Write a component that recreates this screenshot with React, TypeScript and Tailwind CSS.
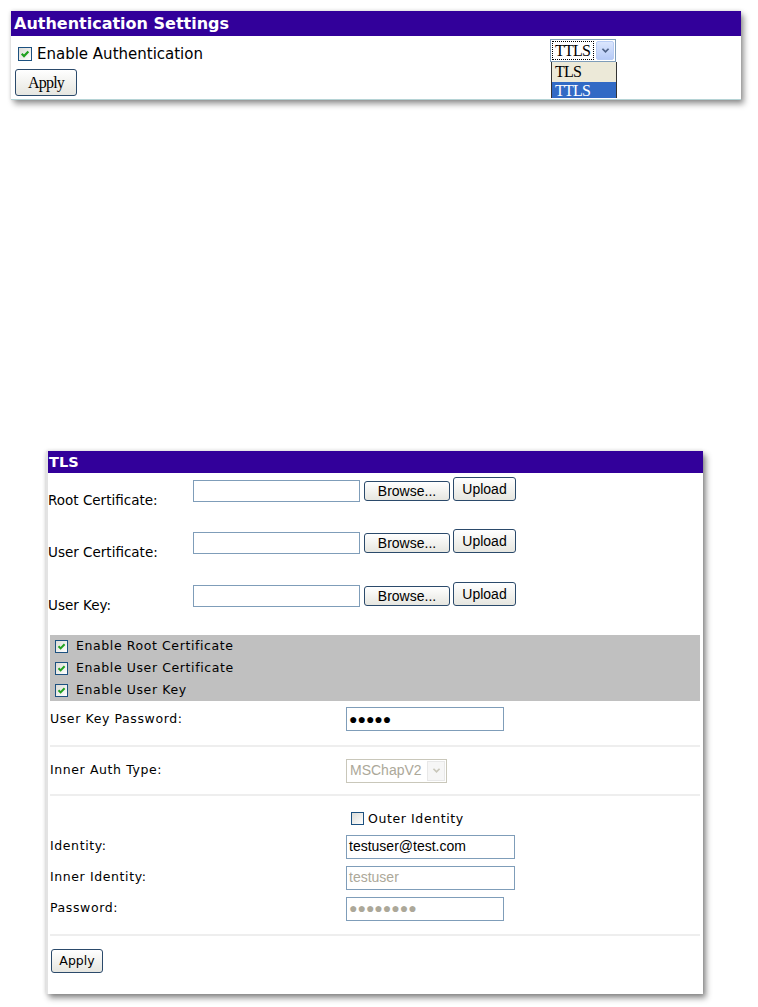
import React from 'react';

const XpCheck = ({ checked, big }: { checked: boolean; big?: boolean }) => (
  <span
    className={`relative inline-block shrink-0 border border-[#1c5180] bg-gradient-to-br from-[#dcdcd7] to-white ${big ? 'h-[14px] w-[14px]' : 'h-[13px] w-[13px]'}`}
  >
    {checked && (
      <svg viewBox="0 0 11 11" className="absolute left-0 top-0 h-full w-full">
        <path d="M2.5 5.2 L4.6 7.4 L8.6 3.2" stroke="#21a121" strokeWidth="2" fill="none" />
      </svg>
    )}
  </span>
);

const Chevron = ({ color }: { color: string }) => (
  <svg viewBox="0 0 10 8" className="h-[7px] w-[9px]">
    <path d="M1.5 2 L5 5.5 L8.5 2" stroke={color} strokeWidth="2" fill="none" />
  </svg>
);

const XpButton = ({ label, className }: { label: string; className: string }) => (
  <button
    className={`flex shrink-0 items-center justify-center rounded-[3px] border border-[#2b4a6b] bg-gradient-to-b from-white to-[#e6e6e0] text-black ${className}`}
  >
    {label}
  </button>
);

const TextBox = ({ className, children }: { className: string; children?: React.ReactNode }) => (
  <div
    className={`flex shrink-0 items-center border border-[#7f9db9] bg-white pl-[2px] font-['Liberation_Sans'] text-[14px] ${className}`}
  >
    {children}
  </div>
);

const Row = ({ label, children, className }: { label: string; children: React.ReactNode; className: string }) => (
  <div className={`flex items-center ${className}`}>
    <div className="w-[296px] shrink-0">{label}</div>
    {children}
  </div>
);

const Separator = () => <div className="h-[2px] bg-[#eeeeee]" />;

const FileRow = ({ label, className }: { label: string; className: string }) => (
  <div className={`flex items-start ${className}`}>
    <div className="w-[145px] shrink-0 pt-[15px] font-['DejaVu_Sans'] text-[13.5px] leading-[16px]">{label}</div>
    <TextBox className="mt-[3px] h-[22px] w-[167px]" />
    <XpButton label="Browse..." className="ml-[4px] mt-[4px] h-[20px] w-[86px] font-['Liberation_Sans'] text-[14px]" />
    <XpButton label="Upload" className="ml-[3px] h-[24px] w-[63px] font-['Liberation_Sans'] text-[14px]" />
  </div>
);

export default function App() {
  return (
    <div className="min-h-screen bg-white pt-[11px] text-black">
      {/* Authentication Settings */}
      <div className="relative ml-[11px] h-[89px] w-[730px] border-b border-[#b5d3d5] bg-white shadow-[3px_4px_6px_rgba(0,0,0,0.4),0_0_4px_rgba(0,0,0,0.15)]">
        <div className="h-[25px] bg-[#32009a] pl-[3px] font-['DejaVu_Sans'] text-[16px] font-bold leading-[25px] text-white">
          Authentication Settings
        </div>
        <div className="flex h-[33px] items-start justify-between">
          <div className="flex items-center gap-[5px] pl-[7px] pt-[10px] font-['DejaVu_Sans'] text-[15px] leading-[16px]">
            <XpCheck checked big />
            <span>Enable Authentication</span>
          </div>
          <div className="relative mr-[125px] mt-[3px] flex h-[23px] w-[66px] items-center border border-[#7f9db9] bg-white pl-[1px]">
            <div className="flex h-[19px] w-[42px] items-center border border-dotted border-black px-[2px] font-['Liberation_Serif'] text-[16px] tracking-[-0.8px]">
              TTLS
            </div>
            <div className="ml-auto mr-[1px] flex h-[19px] w-[18px] items-center justify-center rounded-[2px] border border-[#b9cdf5] bg-gradient-to-b from-[#dbe6fd] to-[#b7cbf7]">
              <Chevron color="#4d6185" />
            </div>
            <div className="absolute left-0 top-[22px] w-[66px] border-x border-[#333] font-['Liberation_Serif'] text-[16px] tracking-[-0.8px]">
              <div className="h-[20px] bg-[#ece9d8] pl-[3px] leading-[20px]">TLS</div>
              <div className="h-[16px] overflow-hidden bg-[#316ac5] pl-[3px] leading-[18px] text-white">TTLS</div>
            </div>
          </div>
        </div>
        <button className="ml-[4px] h-[27px] w-[62px] rounded-[3px] border border-[#2b4a6b] bg-gradient-to-b from-white to-[#e6e6e0] font-['Liberation_Serif'] text-[16px] tracking-[-0.8px]">
          Apply
        </button>
      </div>

      {/* TLS */}
      <div className="ml-[46px] mt-[351px] h-[543px] w-[657px] border-l-[2px] border-[#e3e3e3] bg-white shadow-[3px_4px_6px_rgba(0,0,0,0.45),0_0_4px_rgba(0,0,0,0.15)]">
        <div className="h-[22px] bg-[#32009a] pl-[1px] font-['DejaVu_Sans'] text-[14.5px] font-bold leading-[22px] text-white">
          TLS
        </div>
        <div className="pt-[4px]">
          <FileRow label="Root Certificate:" className="h-[52px]" />
          <FileRow label="User Certificate:" className="h-[53px]" />
          <FileRow label="User Key:" className="h-[53px]" />
        </div>
        <div className="ml-[2px] w-[650px] font-['DejaVu_Sans'] text-[12.5px] tracking-[0.6px]">
          <div className="bg-[#c0c0c0]">
            {['Enable Root Certificate', 'Enable User Certificate', 'Enable User Key'].map((t) => (
              <div key={t} className="flex h-[22px] items-center gap-[8px] pl-[5px]">
                <XpCheck checked />
                <span>{t}</span>
              </div>
            ))}
          </div>
          <Row label="User Key Password:" className="h-[44px] pb-[8px]">
            <TextBox className="h-[24px] w-[158px] text-[13px] tracking-[0px]">●●●●●</TextBox>
          </Row>
          <Separator />
          <Row label="Inner Auth Type:" className="h-[47px]">
            <div className="flex h-[24px] w-[101px] items-center border border-[#c9c7ba] bg-white pl-[3px] font-['Liberation_Sans'] text-[14px] tracking-[0px] text-[#aca899]">
              MSChapV2
              <div className="ml-auto mr-[1px] flex h-[20px] w-[18px] items-center justify-center border border-[#e8e8e8] bg-[#f6f6f6]">
                <Chevron color="#c9c7ba" />
              </div>
            </div>
          </Row>
          <Separator />
          <div className="flex h-[35px] items-start pl-[301px] pt-[16px]">
            <XpCheck checked={false} />
            <span className="ml-[4px] leading-[14px]">Outer Identity</span>
          </div>
          <Row label="Identity:" className="h-[31px]">
            <TextBox className="h-[24px] w-[169px] tracking-[0px]">testuser@test.com</TextBox>
          </Row>
          <Row label="Inner Identity:" className="h-[31px]">
            <TextBox className="h-[24px] w-[169px] tracking-[0px] text-[#aca899]">testuser</TextBox>
          </Row>
          <Row label="Password:" className="h-[31px]">
            <TextBox className="h-[24px] w-[158px] text-[13px] tracking-[0px] text-[#aca899]">●●●●●●●●</TextBox>
          </Row>
          <div className="h-[10px]" />
          <Separator />
          <button className="ml-[1px] mt-[13px] h-[24px] w-[52px] rounded-[3px] border border-[#2b4a6b] bg-gradient-to-b from-white to-[#e6e6e0] text-[12.5px] tracking-[0px]">
            Apply
          </button>
        </div>
      </div>
    </div>
  );
}
